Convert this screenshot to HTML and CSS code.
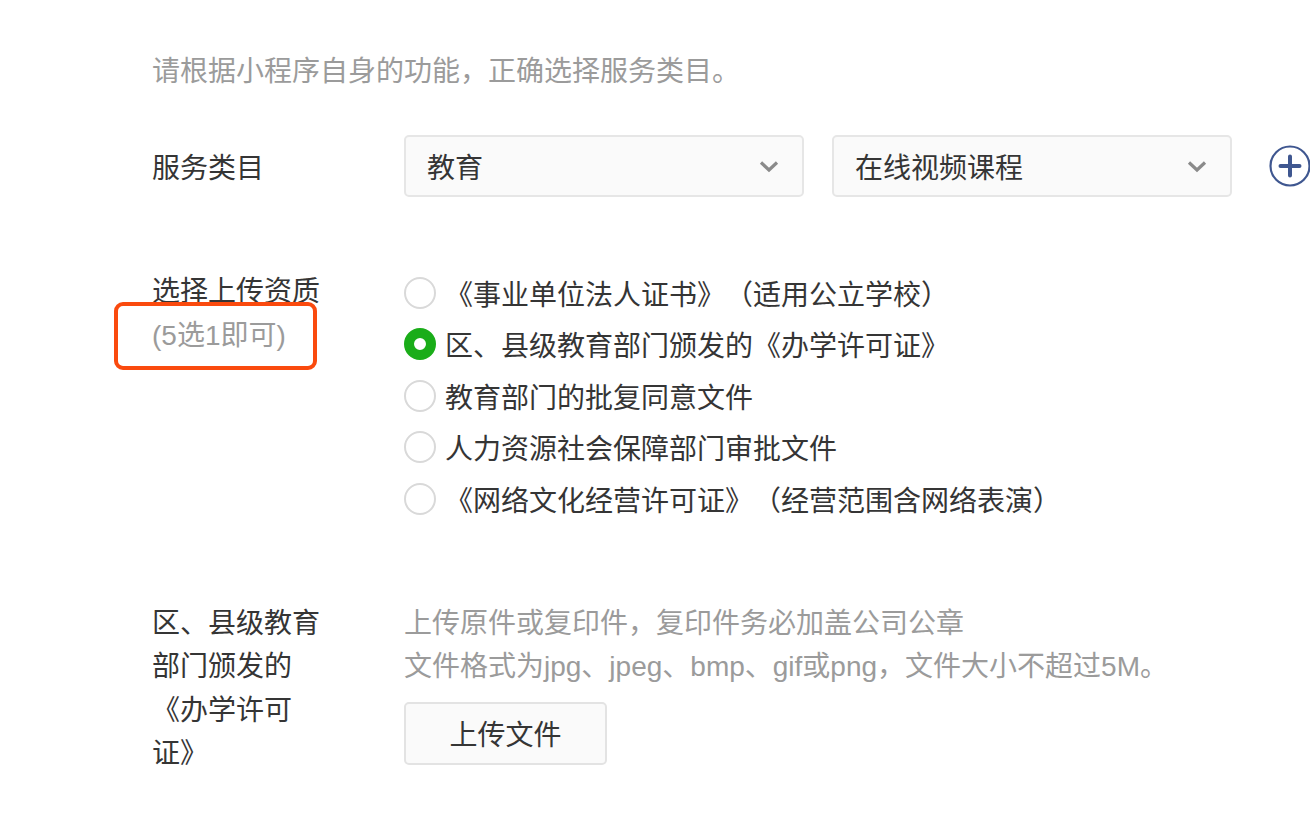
FILE: index.html
```html
<!DOCTYPE html>
<html lang="zh-CN">
<head>
<meta charset="utf-8">
<title>服务类目</title>
<link rel="stylesheet" href="styles.css">
</head>
<body>
<div class="page">
  <p class="intro">请根据小程序自身的功能，正确选择服务类目。</p>

  <div class="row row-category">
    <div class="label">服务类目</div>
    <div class="content selects">
      <div class="select">
        <span>教育</span>
        <svg class="chev" width="20" height="13" viewBox="0 0 20 13"><path d="M2 2.5 L10 10 L18 2.5" fill="none" stroke="#8a8a8a" stroke-width="3.2"/></svg>
      </div>
      <div class="select">
        <span>在线视频课程</span>
        <svg class="chev" width="20" height="13" viewBox="0 0 20 13"><path d="M2 2.5 L10 10 L18 2.5" fill="none" stroke="#8a8a8a" stroke-width="3.2"/></svg>
      </div>
      <svg class="add" width="42" height="42" viewBox="0 0 42 42"><circle cx="21" cy="21" r="19.5" fill="none" stroke="#3f5790" stroke-width="2.2"/><path d="M11.5 21 H30.5 M21 11.5 V30.5" stroke="#3f5790" stroke-width="4" stroke-linecap="round"/></svg>
    </div>
  </div>

  <div class="row row-qual">
    <div class="label label-qual">选择上传资质<br><span class="sub">(5选1即可)</span></div>
    <div class="content radios">
      <div class="radio"><span class="dot"></span>《事业单位法人证书》（适用公立学校）</div>
      <div class="radio"><span class="dot on"></span>区、县级教育部门颁发的《办学许可证》</div>
      <div class="radio"><span class="dot"></span>教育部门的批复同意文件</div>
      <div class="radio"><span class="dot"></span>人力资源社会保障部门审批文件</div>
      <div class="radio"><span class="dot"></span>《网络文化经营许可证》（经营范围含网络表演）</div>
    </div>
  </div>

  <div class="row row-upload">
    <div class="label label-upload">区、县级教育部门颁发的《办学许可证》</div>
    <div class="content">
      <div class="hint">上传原件或复印件，复印件务必加盖公司公章<br>文件格式为jpg、jpeg、bmp、gif或png，文件大小不超过5M。</div>
      <button class="btn" type="button">上传文件</button>
    </div>
  </div>
</div>
</body>
</html>
```

FILE: styles.css
```css
html, body {
  margin: 0;
  padding: 0;
  background: #ffffff;
}
body {
  font-family: "Liberation Sans", "Noto Sans CJK SC", sans-serif;
  font-size: 28px;
  color: #353535;
  width: 1310px;
  height: 836px;
  overflow: hidden;
  text-spacing-trim: space-all;
}
.page {
  padding: 52px 0 0 152px;
}
.intro {
  margin: 0;
  line-height: 40px;
  color: #9b9b9b;
}
.row {
  display: flex;
  align-items: flex-start;
}
.label {
  width: 172px;
  flex: none;
  margin-right: 80px;
}
.row-category {
  margin-top: 43px;
  align-items: center;
  height: 62px;
}
.selects {
  display: flex;
  align-items: center;
}
.select {
  box-sizing: border-box;
  width: 400px;
  height: 62px;
  border: 2px solid #e6e6e6;
  border-radius: 5px;
  background: #fafafa;
  display: flex;
  align-items: center;
  justify-content: space-between;
  padding: 0 23px 0 21px;
  margin-right: 28px;
  color: #353535;
}
.chev {
  display: block;
}
.add {
  display: block;
  margin-left: 9px;
  flex: none;
}
.row-qual {
  margin-top: 70px;
}
.label-qual {
  line-height: 44px;
  margin-top: 3px;
}
.sub {
  color: #9b9b9b;
  position: relative;
}
.sub::after {
  content: "";
  position: absolute;
  left: -38px;
  right: -31px;
  top: -18px;
  bottom: -19px;
  border: 4px solid #fa4a0e;
  border-radius: 9px;
}
.radios {
  display: flex;
  flex-direction: column;
}
.radio {
  height: 51.5px;
  display: flex;
  align-items: center;
}
.dot {
  box-sizing: border-box;
  width: 32px;
  height: 32px;
  border-radius: 50%;
  border: 2px solid #d9d9d9;
  background: #fff;
  margin-right: 9px;
  flex: none;
}
.dot.on {
  border: 10px solid #1aad19;
}
.row-upload {
  margin-top: 77px;
}
.label-upload {
  line-height: 43.5px;
  margin-top: 0;
}
.hint {
  color: #9b9b9b;
  line-height: 43.5px;
}
.btn {
  display: block;
  box-sizing: border-box;
  margin-top: 13px;
  width: 203px;
  height: 63px;
  border: 2px solid #e3e3e3;
  border-radius: 5px;
  background: #fafafa;
  font-family: "Liberation Sans", "Noto Sans CJK SC", sans-serif;
  font-size: 28px;
  color: #353535;
  padding: 0;
}
```
